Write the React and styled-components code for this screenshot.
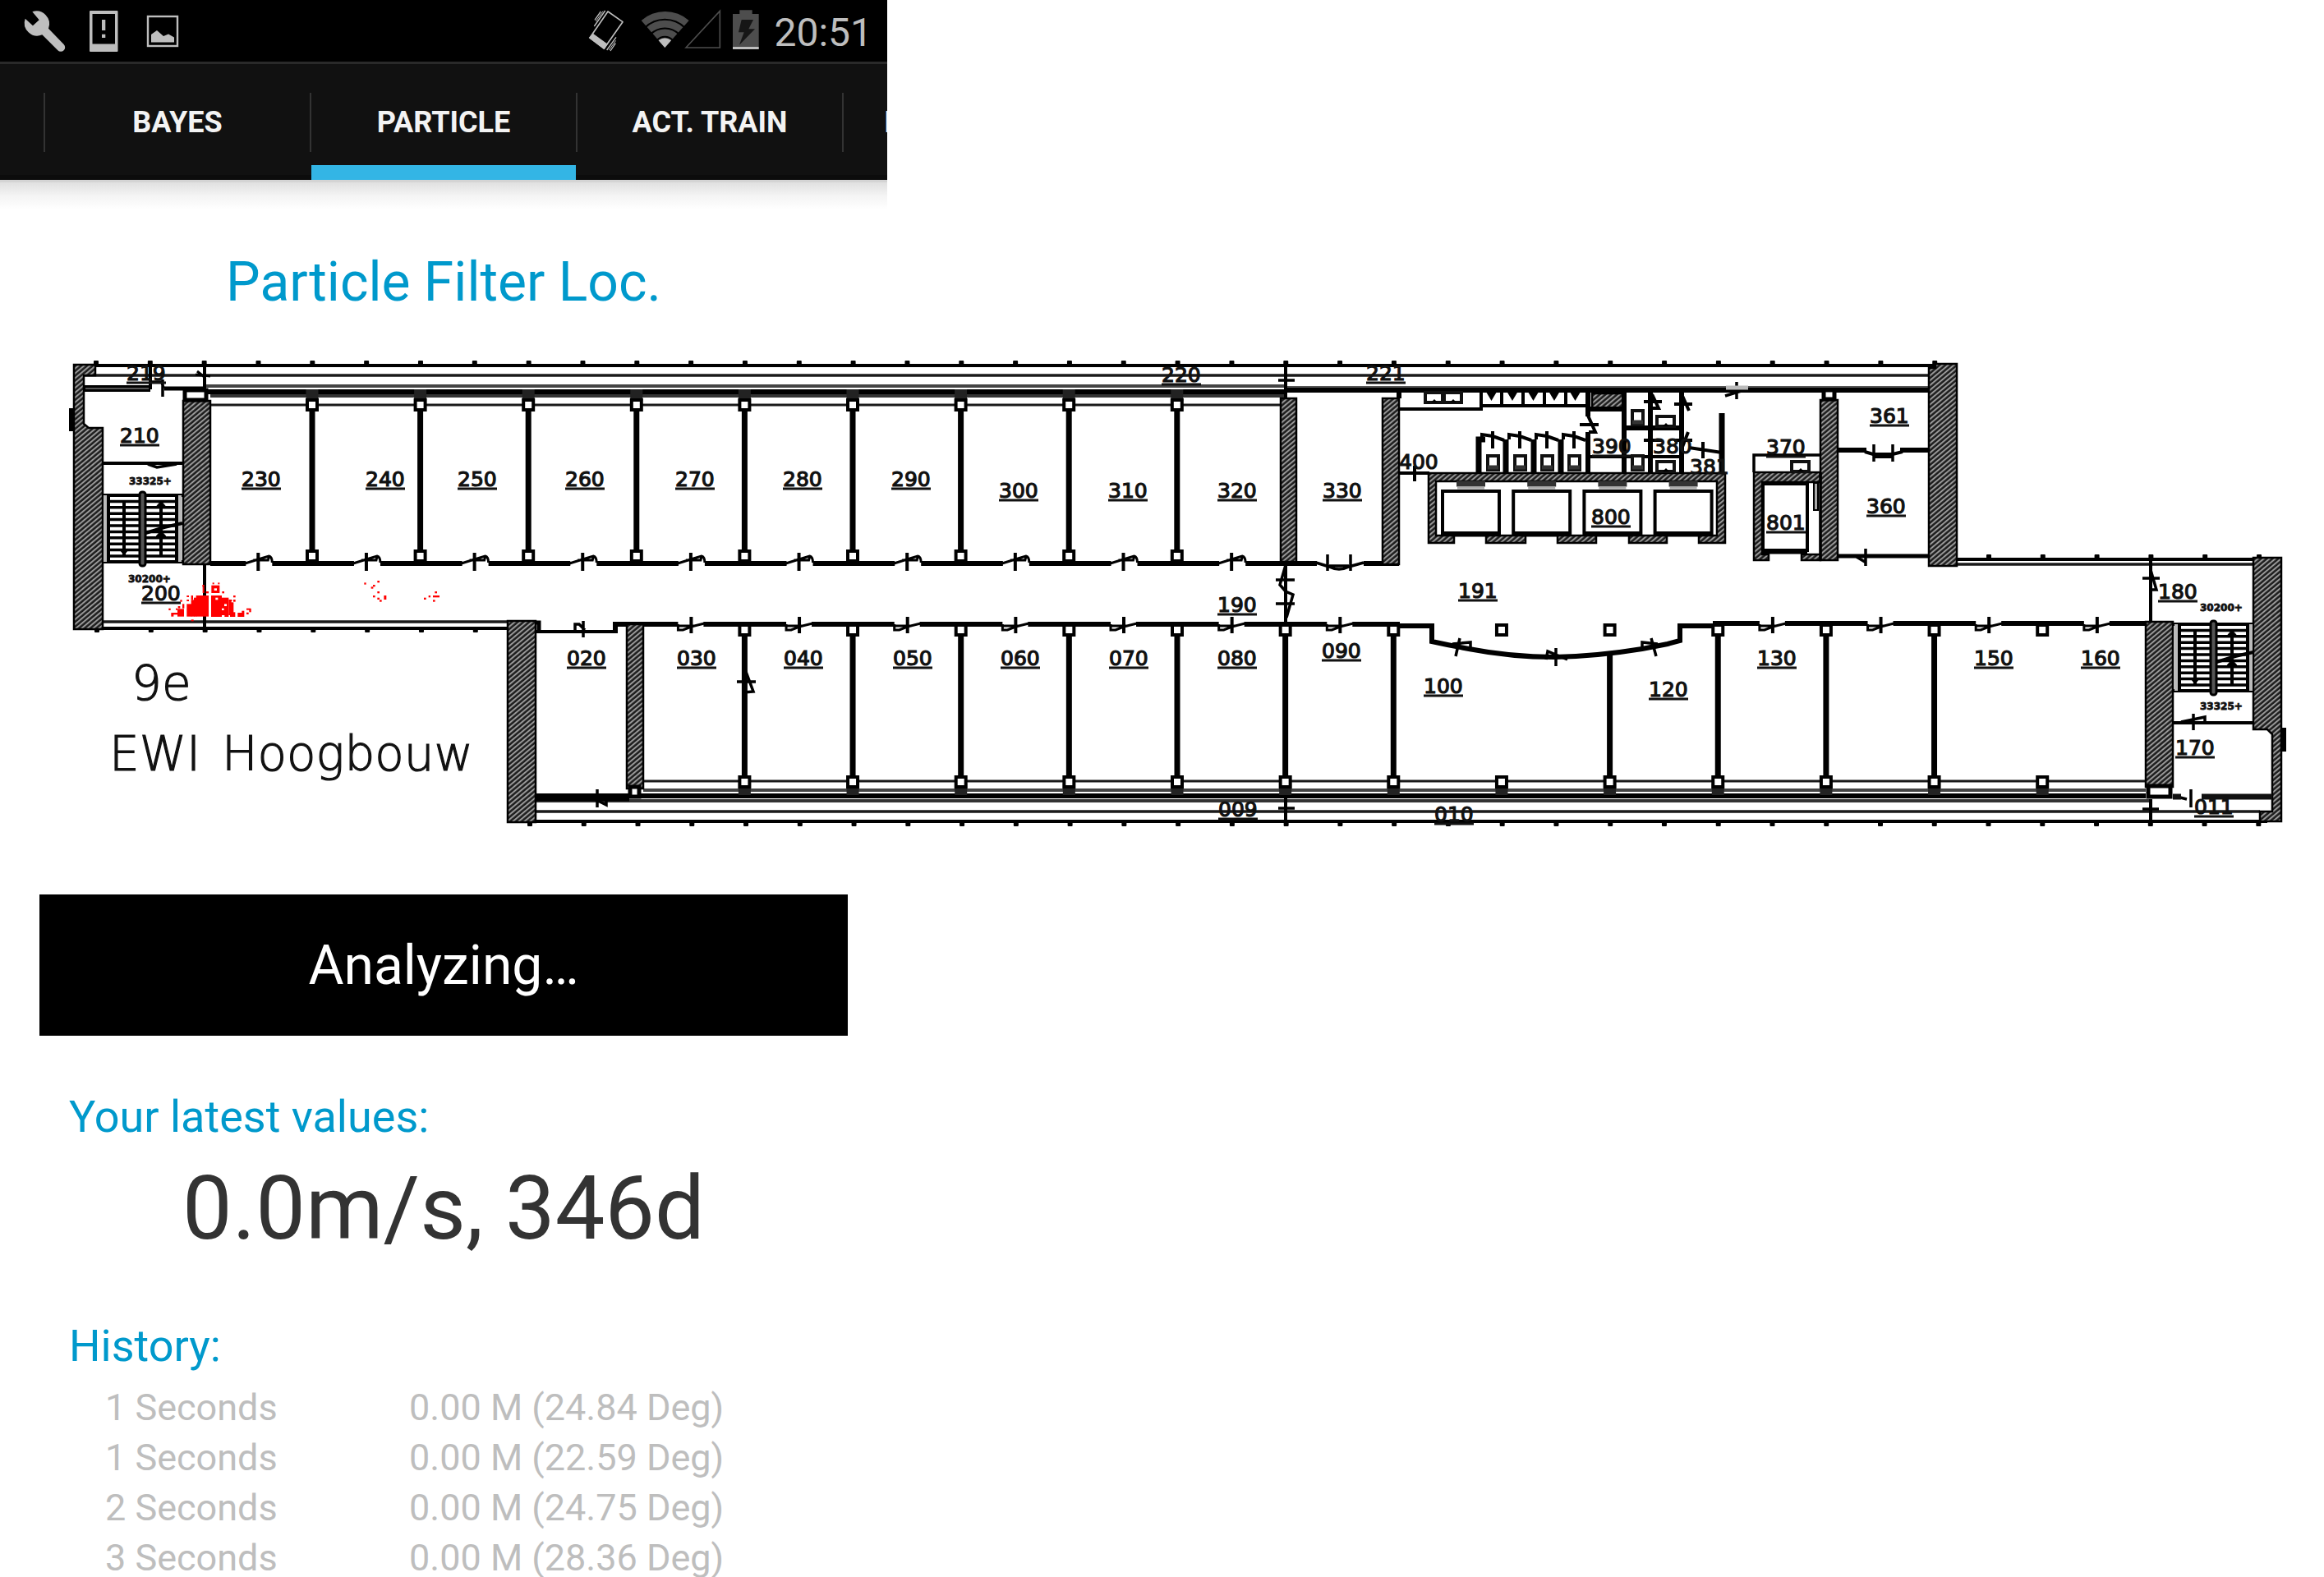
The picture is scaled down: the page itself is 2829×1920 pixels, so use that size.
import React from "react";
import styled, { createGlobalStyle } from "styled-components";

const GlobalStyle = createGlobalStyle`
  * { box-sizing: border-box; }
  body {
    margin: 0;
    background: #fff;
    font-family: Roboto, "Liberation Sans", sans-serif;
  }
`;

const Page = styled.main`
  height: 100vh;
  overflow: hidden;
  display: flex;
  flex-direction: column;
`;

const Column = styled.div`
  width: 100%;
  max-width: 1080px;
  flex: none;
`;

const StatusBar = styled.div`
  display: flex;
  justify-content: space-between;
  height: 78px;
  padding: 0 18px 0 29px;
  background: #000;
  border-bottom: 3px solid #2a2a2a;
`;

const IconGroup = styled.div`
  display: flex;
  align-items: center;
  gap: ${(p) => p.$gap}px;
`;

const Icon = styled.svg`
  display: block;
  height: 75px;
  overflow: visible;
`;

const Clock = styled.time`
  color: #bebebe;
  font-size: 48px;
  line-height: 75px;
  padding-top: 4px;
`;

const TabBar = styled.nav`
  display: flex;
  align-items: center;
  height: 141px;
  padding-left: 53px;
  overflow: hidden;
  background: #111;
  box-shadow: inset 0 -6px 0 #0c0c0c;
`;

const TabDivider = styled.span`
  flex: none;
  width: 2px;
  height: 72px;
  background: #333;
`;

const Tab = styled.button`
  flex: none;
  width: 322px;
  height: 141px;
  padding: 18px 0 0;
  border: 0;
  border-bottom: 18px solid ${(p) => (p.$active ? "#33b5e5" : "transparent")};
  background: none;
  color: #f3f3f3;
  font-family: inherit;
  font-size: 36px;
  font-weight: 700;
  text-transform: uppercase;
  white-space: nowrap;
`;

const BarShadow = styled.div`
  height: 36px;
  border-top: 3px solid #d4d4d4;
  background: linear-gradient(#e0e0e0, #f4f4f4 50%, #fff);
`;

const Title = styled.h1`
  margin: 0;
  padding: 50px 0 17px;
  color: #0099cc;
  font-size: 66px;
  font-weight: 400;
  line-height: 78px;
  text-align: center;
`;

const Plan = styled.svg`
  display: block;
  flex: none;
  width: 100%;
  height: auto;
`;

const RoomNumber = styled.text`
  font-family: "DejaVu Sans", sans-serif;
  font-size: 25px;
  fill: #111;
  stroke: #111;
  stroke-width: 1.2px;
`;

const LevelNote = styled.text`
  font-family: "DejaVu Sans", sans-serif;
  font-size: 12px;
  font-weight: 700;
  fill: #111;
  stroke: #111;
  stroke-width: 0.8px;
`;

const PlanCaption = styled.text`
  font-family: "DejaVu Sans Light", "DejaVu Sans", sans-serif;
  font-size: 58px;
  font-weight: 200;
  fill: #111;
  stroke: #111;
  stroke-width: 1.2px;
`;

const Body = styled.section`
  padding: 49px 48px 0;
`;

const Analyze = styled.button`
  display: block;
  width: 100%;
  height: 172px;
  padding: 0;
  border: 0;
  background: #000;
  color: #fff;
  font-family: inherit;
  font-size: 66px;
`;

const Heading = styled.h2`
  margin: ${(p) => p.$top}px 0 0;
  padding-left: 36px;
  color: #0099cc;
  font-size: 54px;
  font-weight: 400;
  line-height: 64px;
`;

const Reading = styled.p`
  margin: 16px 0 0;
  color: #333;
  font-size: 108px;
  line-height: 127px;
  text-align: center;
`;

const History = styled.table`
  margin: 12px 0 0 80px;
  border-collapse: collapse;
  color: #bebebe;
  font-size: 45px;
  line-height: 61px;
`;

const Elapsed = styled.td`
  width: 370px;
  padding: 0;
`;

const Moved = styled.td`
  padding: 0;
`;

/* ---------- status icons ---------- */

const WrenchIcon = () => (
  <Icon width="50" viewBox="29 0 50 75" aria-hidden="true">
    <path
      transform="scale(.33333)"
      fill="#bebebe"
      d="M118 43A47 47 0 0 1 177 104L233 162A15 15 0 0 1 211 184L154 127A47 47 0 0 1 92 68L120 94L143 73Z"
    />
  </Icon>
);

const DeviceAlertIcon = () => (
  <Icon width="35" viewBox="109 0 35 75" aria-hidden="true">
    <path
      fill="#bebebe"
      fillRule="evenodd"
      d="M110 13h32.500a1 1 0 0 1 1 1v48a1 1 0 0 1-1 1h-32.500a1 1 0 0 1-1-1v-48a1 1 0 0 1 1-1zM112.500 17v36.500h27.500v-36.500z"
    />
    <path fill="#bebebe" d="M124 24h4.300v13h-4.300zM124 41.700h4.300v4.300h-4.300z" />
  </Icon>
);

const PictureIcon = () => (
  <Icon width="43" viewBox="174 0 43 75" aria-hidden="true">
    <rect x="180" y="20" width="36" height="36" fill="none" stroke="#bebebe" strokeWidth="2.400" />
    <path fill="#bebebe" d="M184 51.500V42l7-5 8 7 6-2.500 7 4v6z" />
  </Icon>
);

const VibrateIcon = () => (
  <Icon width="45" viewBox="717 0 45 75" aria-hidden="true">
    <g transform="translate(700 0) scale(.33333)" stroke="#bebebe" strokeWidth="5" fill="none">
      <path d="M120 42L174 80L106 177L54 138Z" strokeLinejoin="round" />
      <path d="M66 126L116 162L106 177L54 138Z" fill="#bebebe" />
      <path d="M94 42L72 73M110 39L70 96M150 136L116 183M148 158L129 186" strokeWidth="4" />
      <path d="M102 41L76 78M149 148L124 183" strokeWidth="3" />
    </g>
  </Icon>
);

const NetworkIcon = () => (
  <Icon width="94" viewBox="780 0 94 75" aria-hidden="true">
    <g transform="translate(700 0) scale(.33333)">
      <path d="M328 174L242 75A131 131 0 0 1 416 75Z" fill="#4d4d4d" />
      <path
        d="M255 101A104 104 0 0 1 401 101M276 125A73 73 0 0 1 380 125M300 146A39 39 0 0 1 356 146"
        fill="none"
        stroke="#000"
        strokeWidth="6"
      />
      <path d="M328 174L305 148A35 35 0 0 1 351 148Z" fill="#bebebe" />
      <path d="M405 174L529 40V174Z" fill="none" stroke="#4d4d4d" strokeWidth="5" />
    </g>
  </Icon>
);

const BatteryIcon = () => (
  <Icon width="32" viewBox="892 0 32 75" aria-hidden="true">
    <g transform="translate(700 0) scale(.33333)">
      <path d="M601 37h46v14h24v129h-95V51h25z" fill="#4d4d4d" />
      <path d="M608 72h43l-17 34h23l-57 58 17-46h-20z" fill="#161616" />
      <path d="M576 171h95v9h-95z" fill="#bebebe" />
    </g>
  </Icon>
);

/* ---------- floor plan ---------- */

const BAY = 131.65;
const range = (n, from = 0) => Array.from({ length: n }, (_, i) => i + from);

const rooms = [
  ["219", 155, 463], ["210", 147, 539], ["200", 173, 731],
  ["230", 295, 592], ["240", 446, 592], ["250", 558, 592], ["260", 689, 592],
  ["270", 823, 592], ["280", 954, 592], ["290", 1086, 592],
  ["300", 1217, 606], ["310", 1350, 606], ["320", 1483, 606], ["330", 1611, 606],
  ["220", 1415, 465], ["221", 1664, 463], ["190", 1483, 745],
  ["020", 691, 810], ["030", 825, 810], ["040", 955, 810], ["050", 1088, 810],
  ["060", 1219, 810], ["070", 1351, 810], ["080", 1483, 810], ["090", 1610, 801],
  ["009", 1484, 994], ["010", 1747, 1000], ["191", 1776, 728],
  ["100", 1734, 844], ["120", 2008, 848], ["130", 2140, 810],
  ["150", 2404, 810], ["160", 2534, 810], ["180", 2628, 729], ["170", 2649, 919],
  ["011", 2672, 991], ["361", 2277, 515], ["360", 2273, 625], ["370", 2151, 553],
  ["801", 2151, 645], ["800", 1938, 638], ["400", 1704, 571],
  ["390", 1939, 552], ["380", 2013, 552], ["381", 2058, 577],
];
const plainRooms = ["400", "380", "381"];

const hatched = [
  "M90 444H116V457H102V516L108 521H125V766H90Z",
  "M223 488H256V687H223Z",
  "M1559 485H1578V684H1559Z",
  "M1683 485H1703V687H1683Z",
  "M618 756H652V1001H618Z",
  "M763 760H783V960H763Z",
  "M2216 487H2237V682H2216Z",
  "M2348 448H2356V443H2382V689H2348Z",
  "M2612 757H2645V958H2612Z",
  "M2743 679H2777V1000H2751V988H2766V894L2760 888H2743Z",
  "M1938 479H1977V497H1938Z",
  "M1739 576H2100V661H2068V652H2090V586H1748V652H1770V661H1739Z",
  "M1809 652H1857V661H1809Z",
  "M1896 652H1943V661H1896Z",
  "M1983 652H2029V661H1983Z",
  "M2135 575H2216V587H2145V675H2153V682H2135Z",
  "M2193 675H2216V682H2193Z",
];

const particles = [
  [296, 88, 6, 6], [316, 88, 6, 6], [259, 96, 7, 8], [292, 98, 30, 28], [260, 104, 6, 22],
  [272, 120, 10, 7], [331, 120, 8, 7], [202, 135, 8, 6], [202, 150, 8, 6], [218, 135, 7, 16],
  [236, 135, 46, 77], [228, 143, 10, 69], [218, 151, 12, 61], [202, 166, 18, 46],
  [291, 135, 39, 78], [330, 143, 25, 64], [355, 150, 10, 57], [363, 160, 10, 46],
  [340, 200, 15, 13], [360, 196, 19, 17], [372, 135, 8, 7], [372, 150, 8, 8], [361, 150, 6, 6],
  [178, 151, 7, 7], [186, 166, 7, 16], [168, 184, 24, 28], [170, 174, 8, 8], [162, 182, 6, 6],
  [136, 182, 7, 7], [145, 198, 28, 7], [145, 204, 9, 8], [218, 223, 9, 6],
  [388, 198, 24, 15], [403, 191, 9, 8], [420, 182, 16, 6], [430, 184, 7, 12], [420, 197, 8, 7],
  [850, 88, 7, 7], [898, 81, 8, 7], [882, 96, 8, 7], [875, 103, 8, 7], [898, 120, 8, 7],
  [882, 135, 8, 7], [898, 143, 8, 7], [906, 151, 8, 7], [922, 135, 9, 15],
  [1108, 120, 8, 7], [1068, 143, 8, 7], [1085, 135, 7, 7], [1101, 135, 24, 7], [1101, 151, 8, 7],
];

const gaps = [[302, 109, 10, 8], [307, 143, 9, 8], [339, 166, 9, 8], [330, 182, 8, 7]];

const Pillar = ({ x, y }) => (
  <rect x={x - 6} y={y - 6} width="12" height="12" fill="#fff" stroke="#000" strokeWidth="4" />
);

const UpperDoor = ({ x }) => (
  <g fill="none" stroke="#000">
    <path d={`M${x - 15} 685H${x + 17}`} stroke="#fff" strokeWidth="8" />
    <path d={`M${x - 16} 686L${x} 681L${x + 13} 677Q${x + 17} 678 ${x + 17} 685M${x - 6} 682H${x + 12}L${x + 13} 678`} strokeWidth="3" />
    <path d={`M${x} 673V695`} strokeWidth="4" />
  </g>
);

const LowerDoor = ({ x }) => (
  <g fill="none" stroke="#000">
    <path d={`M${x - 16} 759H${x + 15}`} stroke="#fff" strokeWidth="8" />
    <path d={`M${x - 16} 760V767H${x - 10}L${x} 763L${x + 16} 759M${x - 15} 762H${x + 6}`} strokeWidth="3" />
    <path d={`M${x} 751V771`} strokeWidth="4" />
  </g>
);

const Stairs = ({ x, y }) => (
  <g fill="none" stroke="#000">
    <path d={`M${x} ${y}H${x + 98}M${x} ${y + 81}H${x + 98}`} strokeWidth="4" />
    <path d={`M${x + 4} ${y}V${y + 81}M${x + 95} ${y}V${y + 81}`} stroke="#bbb" strokeWidth="4" />
    <path d={`M${x + 8} ${y}V${y + 81}M${x + 91} ${y}V${y + 81}`} strokeWidth="4" />
    {range(10, 1).map((i) => (
      <path key={i} d={`M${x + 8} ${y + i * 7.4}H${x + 91}`} strokeWidth="3.500" />
    ))}
    <path d={`M${x + 27} ${y + 8}V${y + 74}M${x + 72} ${y + 8}V${y + 74}M${x + 50} ${y + 47}L${x + 76} ${y + 39}L${x + 98} ${y + 34}`} strokeWidth="4" />
    <path d={`M${x + 22} ${y + 66}h10l-5 7zM${x + 66} ${y + 14}h12l-6 -7zM${x + 66} ${y + 50}h12l-6 -7z`} fill="#000" />
    <rect x={x + 46} y={y - 4} width="7" height="90" rx="3" fill="#555" strokeWidth="3" />
  </g>
);

const Toilet = ({ x, y }) => (
  <g>
    <rect x={x} y={y} width="13" height="17" fill="#fff" stroke="#111" strokeWidth="4" />
    <path d={`M${x} ${y + 14}h13`} stroke="#333" strokeWidth="5" />
  </g>
);

const Basin = ({ x, y }) => (
  <g>
    <rect x={x} y={y} width="21" height="12" fill="none" stroke="#111" strokeWidth="4" />
    <path d={`M${x + 7} ${y + 12}l4 -4 4 4z`} />
  </g>
);

function FloorPlan() {
  return (
    <Plan viewBox="0 400 2829 640" role="img" aria-label="9e EWI Hoogbouw">
      <defs>
        <pattern id="hatch" width="6" height="4.500" patternUnits="userSpaceOnUse" patternTransform="rotate(-40)">
          <rect width="6" height="4.500" fill="#1c1c1c" />
          <rect y="1" width="6" height="1.900" fill="#a0a0a0" />
        </pattern>
      </defs>

      {/* façades of both wings */}
      <g fill="none" stroke="#000">
        <path d="M90 445H2356M653 1000H2760M2382 681H2750" strokeWidth="4" />
        <path d="M102 457H2348M653 988H2751M125 757H619M2382 687H2743" stroke="#1a1a1a" strokeWidth="3.500" />
        <path d="M90 765H619" strokeWidth="4" />
        <path d="M250 470H1564M783 962H2612" stroke="#444" strokeWidth="4" />
        <path d="M250 477H1564M652 969H2612" strokeWidth="6" />
        <path d="M256 482H1564M652 975H2620" stroke="#333" strokeWidth="4" />
        <path d="M256 493H1559M783 951H2612" stroke="#1a1a1a" strokeWidth="3" />
        <path d="M102 473H183M1564 474H2348" strokeWidth="8" />
        <path d="M1564 471H2348M104 473H183" stroke="#555" strokeWidth="2" />
        <path d="M200 473H250" strokeWidth="5" />
        <path d="M183 440V474M249 440V478M249 687V768M1565 440V485M1565 684V760M1565 966V1006M2618 675V757M2618 973V1005" strokeWidth="4" />
        <path d="M238 456L256 458M240 452L250 460" strokeWidth="3" />
      </g>
      {range(35).map((i) => (
        <rect key={i} x={114 + i * 65.83} y="439" width="6" height="5" rx="1" />
      ))}
      {range(33).map((i) => (
        <rect key={i} x={642 + i * 65.76} y="1001" width="6" height="5" rx="1" />
      ))}
      {range(8).map((i) => (
        <rect key={i} x={115 + i * 65.83} y="766" width="6" height="4" rx="1" />
      ))}
      {range(6).map((i) => (
        <rect key={i} x={2418 + i * 65.8} y="675" width="6" height="5" rx="1" />
      ))}

      {/* corridor walls */}
      <g fill="none" stroke="#000" strokeWidth="6">
        <path d="M256 686H1603M1660 686H1703M749 771V760H1704M2085 759H2618" />
        <path d="M1696 762H1743V781L1762 785L1788 790Q1840 800 1892 800Q1944 799 1999 790L2030 784L2045 780V762H2092" />
        <path d="M652 769H749" strokeWidth="4" />
        <path d="M618 758H656V768" strokeWidth="5" />
        <path d="M652 972H766" strokeWidth="7" />
      </g>

      {/* room partitions */}
      {range(9).map((i) => {
        const x = 380 + i * 131.6;
        return (
          <g key={i}>
            <path d={`M${x} 490V680`} stroke="#000" strokeWidth="7" />
            <path d={`M${x} 474V488`} stroke="#222" strokeWidth="15" />
            <Pillar x={x} y={493} />
            <Pillar x={x} y={677} />
          </g>
        );
      })}
      {range(13).map((i) => {
        const x = 906.4 + i * BAY;
        const walled = i !== 7 && i !== 12;
        return (
          <g key={i}>
            {walled && <path d={`M${x} ${i === 8 ? 797 : 768}V950`} stroke="#000" strokeWidth="7" />}
            <path d={`M${x} 954V968`} stroke="#222" strokeWidth="15" />
            <Pillar x={x} y={767} />
            <Pillar x={x} y={952} />
          </g>
        );
      })}

      {range(10).map((i) => (
        <UpperDoor key={i} x={314.3 + i * BAY} />
      ))}
      {[0, 1, 2, 3, 4, 5, 6, 10, 11, 12, 13].map((i) => (
        <LowerDoor key={i} x={841.4 + i * BAY} />
      ))}

      {hatched.map((d) => (
        <path key={d} d={d} fill="url(#hatch)" stroke="#000" strokeWidth="2.500" />
      ))}
      <path d="M84 497h6v28h-6zM2777 886h6v29h-6z" />
      <g fill="#fff" stroke="#000" strokeWidth="5">
        <rect x="225" y="475" width="26" height="12" />
        <rect x="2615" y="957" width="27" height="13" />
        <rect x="2220" y="475" width="13" height="11" />
        <rect x="767" y="958" width="11" height="12" />
      </g>

      {/* other doors */}
      <g fill="none" stroke="#000" strokeWidth="3.500">
        <path d="M183 465H197L199 473M198 462V483M180 565L191 569L215 565M710 756V776M700 767V760H705L712 767" />
        <path d="M727 961V983M718 970L738 980V972M1602 685L1618 690Q1630 696 1642 690L1660 685M1616 675V695M1644 675V695M1618 689H1642" />
        <path d="M1553 706H1576M1553 735H1576M1565 688L1558 712L1565 720L1574 724L1566 752M1556 463H1576M1556 984H1576" />
        <path d="M897 830H920M907 815L917 842L905 843M1777 777L1772 799M1768 784L1790 782V790M1894 789V811M1882 803L1884 793L1908 803" />
        <path d="M2010 777L2016 799M1999 790V782L2018 784M2608 704H2629M2618 694L2625 718H2620M2608 985H2628" />
        <path d="M2281 541V562M2304 541V562M2271 668V689M2260 678L2270 684M2114 465V486M2100 482L2126 474M2670 869V889M2655 879L2684 873V880" />
        <path d="M2667 961V983M2650 970L2662 973" />
      </g>
      <path d="M2101 472h27" stroke="#bbb" strokeWidth="5" />

      {/* stairwells */}
      <path d="M125 564H223M2645 880H2743" stroke="#000" strokeWidth="4" />
      <Stairs x={124} y={603} />
      <Stairs x={2645} y={760} />
      <path d="M2645 970H2655M2680 970H2766" stroke="#111" strokeWidth="7" />

      {/* rooms 360, 361, 370 and the goods lift */}
      <g fill="none" stroke="#000">
        <path d="M2237 548H2272M2313 548H2348" strokeWidth="6" />
        <path d="M2270 550L2280 553H2304L2316 550M2280 556H2304" strokeWidth="4" />
        <path d="M2237 677H2348" strokeWidth="5" />
        <path d="M2135 575V554H2216M2216 575V682" strokeWidth="3.500" />
        <rect x="2146" y="589" width="54" height="81" strokeWidth="4" />
        <path d="M2146 672H2200" strokeWidth="5" />
        <rect x="2208" y="588" width="5" height="33" fill="#aaa" strokeWidth="2" />
      </g>
      <Basin x={2181} y={562} />

      {/* wash rooms */}
      <g fill="none" stroke="#000">
        <path d="M1703 498H1803V494H1933M1803 477V498M1828 477V494M1854 477V494M1880 477V494M1906 477V494" strokeWidth="4" />
        <path d="M1933 477V507M1933 526V575M1977 477V575M2009 477V575M2047 477V575M1977 521H2049M1933 498H1977M1703 477V485" strokeWidth="6" />
        <path d="M1800 575V535H1808M1833 535V575M1867 535V575M1900 535V575M2096 503V576" strokeWidth="7" />
        <path d="M1933 556H2046M1703 576H1740M1722 567V586M2056 545L2096 551M2073 538V558" strokeWidth="4" />
        <path d="M1923 517H1946M1933 506L1942 526H1934M2001 489H2023M2038 492H2060M2001 536H2023M2038 536H2060M2011 480L2019 497H2010M2048 482L2056 500M2048 544L2055 526" strokeWidth="4" />
        {range(4).map((i) => {
          const x = 1817 + i * 33;
          return <path key={i} d={`M${x} 525V546M${x - 13} 535V529L${x} 531L${x + 14} 536`} strokeWidth="4" />;
        })}
      </g>
      {range(5).map((i) => (
        <path key={i} d={`M${1809 + i * 25.5} 477h13l-6.500 11z`} />
      ))}
      {range(4).map((i) => (
        <Toilet key={i} x={1811 + i * 33} y={555} />
      ))}
      <Toilet x={1987} y={500} />
      <Toilet x={1987} y={555} />
      <Basin x={1735} y={478} />
      <Basin x={1758} y={478} />
      <Basin x={2017} y={507} />
      <Basin x={2017} y={562} />

      {/* passenger lifts */}
      {range(4).map((i) => {
        const x = 1756 + i * 86.2;
        return (
          <g key={i}>
            <path d={`M${x + 17} 589h35`} stroke="#333" strokeWidth="7" />
            <path d={`M${x + 18} 594h33`} stroke="#aaa" strokeWidth="3" />
            <rect x={x} y="598" width="69" height="51" fill="#fff" stroke="#000" strokeWidth="4" />
            <path d={`M${x + 13} 651h42`} stroke="#000" strokeWidth="5" />
          </g>
        );
      })}

      {rooms.map(([name, x, y]) => (
        <g key={name}>
          <RoomNumber x={x - 1} y={y}>{name}</RoomNumber>
          {!plainRooms.includes(name) && (
            <path d={`M${x - 1} ${y + 3}h48`} stroke="#111" strokeWidth="3" />
          )}
        </g>
      ))}
      <LevelNote x="157" y="590">33325+</LevelNote>
      <LevelNote x="156" y="709">30200+</LevelNote>
      <LevelNote x="2678" y="744">30200+</LevelNote>
      <LevelNote x="2678" y="864">33325+</LevelNote>
      <PlanCaption x="160" y="852">9e</PlanCaption>
      <PlanCaption x="133" y="938">EWI</PlanCaption>
      <PlanCaption x="270" y="938">Hoogbouw</PlanCaption>

      {/* location estimates */}
      <g transform="translate(160 680) scale(.33333)">
        {particles.map(([x, y, w, h]) => (
          <rect key={`${x}-${y}`} x={x} y={y} width={w} height={h} fill="#f00" />
        ))}
        {gaps.map(([x, y, w, h]) => (
          <rect key={`${x}-${y}`} x={x} y={y} width={w} height={h} fill="#fff" />
        ))}
      </g>
    </Plan>
  );
}

/* ---------- screen ---------- */

const tabs = ["Bayes", "Particle", "Act. Train", "Bayes Train"];

const history = [
  ["1 Seconds", "0.00 M (24.84 Deg)"],
  ["1 Seconds", "0.00 M (22.59 Deg)"],
  ["2 Seconds", "0.00 M (24.75 Deg)"],
  ["3 Seconds", "0.00 M (28.36 Deg)"],
];

export default function App() {
  return (
    <Page>
      <GlobalStyle />
      <Column>
        <StatusBar>
          <IconGroup $gap={30}>
            <WrenchIcon />
            <DeviceAlertIcon />
            <PictureIcon />
          </IconGroup>
          <IconGroup $gap={18}>
            <VibrateIcon />
            <NetworkIcon />
            <BatteryIcon />
            <Clock>20:51</Clock>
          </IconGroup>
        </StatusBar>
        <TabBar>
          {tabs.map((name) => (
            <React.Fragment key={name}>
              <TabDivider />
              <Tab type="button" $active={name === "Particle"}>{name}</Tab>
            </React.Fragment>
          ))}
        </TabBar>
        <BarShadow />
        <Title>Particle Filter Loc.</Title>
      </Column>

      <FloorPlan />

      <Column>
        <Body>
          <Analyze type="button">Analyzing…</Analyze>
          <Heading $top={67}>Your latest values:</Heading>
          <Reading>0.0m/s, 346d</Reading>
          <Heading $top={72}>History:</Heading>
          <History>
            <tbody>
              {history.map(([elapsed, moved]) => (
                <tr key={moved}>
                  <Elapsed>{elapsed}</Elapsed>
                  <Moved>{moved}</Moved>
                </tr>
              ))}
            </tbody>
          </History>
        </Body>
      </Column>
    </Page>
  );
}
